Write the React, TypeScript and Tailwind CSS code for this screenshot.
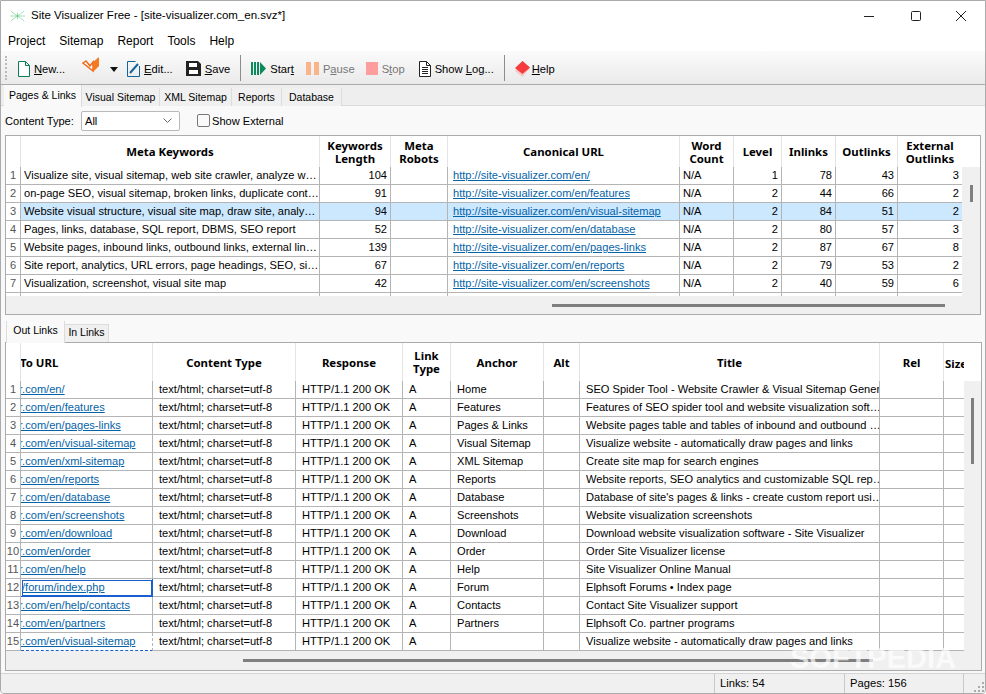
const topCols = "grid grid-cols-[15px_299px_71px_57px_232px_54px_48px_54px_62px_64px]"
const bottomCols = "grid grid-cols-[15px_132px_143px_107px_48px_93px_36px_300px_64px_20px]"
const uiFont = "font-['Liberation_Sans','Noto_Sans',sans-serif]"

const topRows = [
  ["Visualize site, visual sitemap, web site crawler, analyze w…", "104", "http://site-visualizer.com/en/", "1", "78", "43", "3"],
  ["on-page SEO, visual sitemap, broken links, duplicate cont…", "91", "http://site-visualizer.com/en/features", "2", "44", "66", "2"],
  ["Website visual structure, visual site map, draw site, analy…", "94", "http://site-visualizer.com/en/visual-sitemap", "2", "84", "51", "2"],
  ["Pages, links, database, SQL report, DBMS, SEO report", "52", "http://site-visualizer.com/en/database", "2", "80", "57", "3"],
  ["Website pages, inbound links, outbound links, external lin…", "139", "http://site-visualizer.com/en/pages-links", "2", "87", "67", "8"],
  ["Site report, analytics, URL errors, page headings, SEO, si…", "67", "http://site-visualizer.com/en/reports", "2", "79", "53", "2"],
  ["Visualization, screenshot, visual site map", "42", "http://site-visualizer.com/en/screenshots", "2", "40", "59", "6"],
]

const bottomRows = [
  ["r.com/en/", "Home", "SEO Spider Tool - Website Crawler & Visual Sitemap Gener…"],
  ["r.com/en/features", "Features", "Features of SEO spider tool and website visualization soft…"],
  ["r.com/en/pages-links", "Pages & Links", "Website pages table and tables of inbound and outbound …"],
  ["r.com/en/visual-sitemap", "Visual Sitemap", "Visualize website - automatically draw pages and links"],
  ["r.com/en/xml-sitemap", "XML Sitemap", "Create site map for search engines"],
  ["r.com/en/reports", "Reports", "Website reports, SEO analytics and customizable SQL rep…"],
  ["r.com/en/database", "Database", "Database of site's pages & links - create custom report usi…"],
  ["r.com/en/screenshots", "Screenshots", "Website visualization screenshots"],
  ["r.com/en/download", "Download", "Download website visualization software - Site Visualizer"],
  ["r.com/en/order", "Order", "Order Site Visualizer license"],
  ["r.com/en/help", "Help", "Site Visualizer Online Manual"],
  ["/forum/index.php", "Forum", "Elphsoft Forums • Index page"],
  ["r.com/en/help/contacts", "Contacts", "Contact Site Visualizer support"],
  ["r.com/en/partners", "Partners", "Elphsoft Co. partner programs"],
  ["r.com/en/visual-sitemap", "", "Visualize website - automatically draw pages and links"],
]

function Head({ children }: { children?: React.ReactNode }) {
  return (
    <div className="flex items-center justify-center overflow-hidden border-r border-[#e4e4e4] text-center font-['Noto_Sans',sans-serif] text-[11.4px] font-bold leading-[13px] text-black">
      {children}
    </div>
  )
}

function Cell({ className = "", children }: { className?: string; children?: React.ReactNode }) {
  return (
    <div className={`flex items-center overflow-hidden whitespace-nowrap border-r border-b border-[#b4b4b4] ${className}`}>
      {children}
    </div>
  )
}

function Tool({ icon, label, u, rest, off, className = "" }: { icon: React.ReactNode; label?: string; u: string; rest: string; off?: boolean; className?: string }) {
  return (
    <div className={`flex items-center ${off ? "text-[#777]" : "text-black"} ${className}`}>
      {icon}
      <span className="ml-[4px]">
        {label}
        <span className="underline">{u}</span>
        {rest}
      </span>
    </div>
  )
}

function Tab({ active, children, className = "" }: { active?: boolean; children: React.ReactNode; className?: string }) {
  return active ? (
    <div className={`z-10 -mb-px flex h-[22px] items-center justify-center border-r border-[#dcdcdc] bg-[#f9f9f9] pb-[3px] text-black ${className}`}>{children}</div>
  ) : (
    <div className={`mt-[3px] flex h-[18px] items-center justify-center border-r border-[#dcdcdc] bg-[#f0f0f0] text-black ${className}`}>{children}</div>
  )
}

function Logo() {
  return (
    <svg width="15" height="12" viewBox="0 0 18 14" fill="none" stroke="#a6dfba" strokeWidth="1.2">
      <path d="M1 1l5 4 3 2 3-2 5-4M0 7h18M1 13l5-4 3-2 3 2 5 4M9 3v8" />
      <circle cx="9" cy="7" r="1.5" fill="#7ccb98" stroke="none" />
    </svg>
  )
}

export default function App() {
  return (
    <div className={`${uiFont} relative flex h-[694px] w-[986px] flex-col overflow-hidden rounded-b-[4px] border-x border-t border-b border-[#ababab] bg-[#f9f9f9] text-[12px]`}>
      {/* title bar */}
      <div className="flex h-[29px] shrink-0 items-center bg-white pl-[9px] text-[11.5px] text-black">
        <Logo />
        <span className="ml-[6px]">Site Visualizer Free - [site-visualizer.com_en.svz*]</span>
        <div className="ml-auto flex items-center">
          <svg width="46" height="12" viewBox="0 0 46 12" stroke="#222" strokeWidth="1"><path d="M17 6.5h10" /></svg>
          <svg width="46" height="12" viewBox="0 0 46 12" fill="none" stroke="#222" strokeWidth="1"><rect x="18.5" y="1.5" width="9" height="9" rx="1" /></svg>
          <svg width="46" height="12" viewBox="0 0 46 12" stroke="#222" strokeWidth="1"><path d="M17 1l10 10M27 1L17 11" /></svg>
        </div>
      </div>

      {/* menu */}
      <div className="flex h-[21px] shrink-0 items-center gap-[14px] bg-white pl-[7px] text-[12px] text-black">
        <span>Project</span>
        <span>Sitemap</span>
        <span>Report</span>
        <span>Tools</span>
        <span>Help</span>
      </div>

      {/* toolbar */}
      <div className="flex h-[34px] shrink-0 items-center border-b border-[#ababab] bg-gradient-to-b from-[#fbfbfb] to-[#eaeaea] pt-[3px] text-[11.2px]">
        <div className="-mt-[3px] ml-[4px] h-[24px] w-[2px] border-l-2 border-dotted border-[#bbb]" />
        <Tool
          className="ml-[11px]"
          u="N"
          rest="ew..."
          icon={<svg width="12" height="16" viewBox="0 0 12 16" fill="#fff" stroke="#0b7d58"><path d="M.5.5h7l4 4v11H.5zM7.5.5v4h4" /></svg>}
        />
        <svg className="ml-[17px] -mt-[9px]" width="19" height="18" viewBox="0 0 19 18">
          <path d="M1 7l3-2 4 5 3-4v9z" fill="#fff" stroke="#f26a1b" strokeWidth="1.5" />
          <path d="M11 6l6-5v9l-6 6z" fill="#f47a1f" />
        </svg>
        <svg className="ml-[9px] mt-[1px]" width="8" height="5" viewBox="0 0 8 5"><path d="M0 0h8L4 5z" fill="#111" /></svg>
        <Tool
          className="ml-[9px]"
          u="E"
          rest="dit..."
          icon={<svg width="13" height="16" viewBox="0 0 13 16" fill="none" stroke="#15639b"><path d="M12.5 5v10.5H.5V.5h8" /><path d="M3 12l8-9" strokeWidth="2" /></svg>}
        />
        <Tool
          className="ml-[13px]"
          u="S"
          rest="ave"
          icon={<svg width="15" height="15" viewBox="0 0 15 15"><path d="M0 0h12l3 3v12H0z" fill="#222" /><path d="M3 2h8v4H3zM3 9h9v4H3z" fill="#fff" /></svg>}
        />
        <div className="-mt-[3px] ml-[10px] h-[26px] w-px bg-[#8d8d8d]" />
        <Tool
          className="ml-[10px]"
          u=""
          label="Star"
          rest=""
          icon={<svg width="15" height="13" viewBox="0 0 15 13" fill="#0c8a5c"><path d="M0 0h2v13H0zM3 0h2v13H3zM6 0h2v13H6zM9 0l6 6.5L9 13z" /></svg>}
        />
        <span className="text-black underline">t</span>
        <Tool
          off
          className="ml-[12px]"
          label="P"
          u="a"
          rest="use"
          icon={<svg width="13" height="13" viewBox="0 0 13 13" fill="#f9b48c"><path d="M0 0h5v13H0zM8 0h5v13H8z" /></svg>}
        />
        <Tool
          off
          className="ml-[11px]"
          label="S"
          u="t"
          rest="op"
          icon={<div className="h-[13px] w-[12px] bg-[#fd9d9d]" />}
        />
        <Tool
          className="ml-[14px]"
          label="Show "
          u="L"
          rest="og..."
          icon={<svg width="12" height="16" viewBox="0 0 12 16" fill="#fff" stroke="#222"><path d="M.5.5h7l4 4v11H.5zM7.5.5v4h4M3 6.5h6M3 8.5h6M3 10.5h6M3 12.5h6" /></svg>}
        />
        <div className="-mt-[3px] ml-[10px] h-[26px] w-px bg-[#8d8d8d]" />
        <Tool
          className="ml-[10px]"
          u="H"
          rest="elp"
          icon={<svg className="-mr-[2px]" width="15" height="16" viewBox="0 0 15 16"><path d="M7.5 0L15 7l-7.5 9L0 10z" fill="#f5c8c8" /><path d="M7.5 0L15 6.5 7.5 13 0 7z" fill="#f53b3b" /></svg>}
        />
      </div>

      {/* main tabs */}
      <div className="flex h-[21px] shrink-0 border-b border-[#dcdcdc] bg-[#eeeeee] pl-[3px] text-[10.5px]">
        <Tab active className="w-[78px] pt-[2px]">Pages &amp; Links</Tab>
        <Tab className="w-[78px] pt-[2px]">Visual Sitemap</Tab>
        <Tab className="w-[72px] pt-[2px]">XML Sitemap</Tab>
        <Tab className="w-[50px] pt-[2px]">Reports</Tab>
        <Tab className="w-[60px] pt-[2px]">Database</Tab>
      </div>

      {/* filter row */}
      <div className="flex h-[29px] shrink-0 items-center pl-[4px] text-[11.1px] text-black">
        <span className="mt-[2px] w-[69px] whitespace-nowrap">Content Type:</span>
        <div className="ml-[7px] flex h-[20px] w-[99px] items-center justify-between rounded-[2px] border border-[#b8b8b8] bg-white pl-[3px] pr-[7px]">
          <span className="mt-[2px]">All</span>
          <svg width="9" height="5" viewBox="0 0 9 5" fill="none" stroke="#666"><path d="M.5.5l4 4 4-4" /></svg>
        </div>
        <div className="ml-[17px] h-[13px] w-[13px] rounded-[2px] border border-[#777] bg-[#f9f9f9]" />
        <span className="ml-[2px] mt-[2px]">Show External</span>
      </div>

      {/* pages table */}
      <div className="ml-[4px] flex h-[180px] w-[976px] shrink-0 flex-col border border-[#ababab] bg-white text-[11.1px] text-black">
        <div className="flex min-h-0 flex-1">
          <div className="h-full w-[956px] shrink-0 overflow-hidden">
            <div className={`${topCols} h-[31px]`}>
              <Head />
              <Head>Meta Keywords</Head>
              <Head>Keywords<br />Length</Head>
              <Head>Meta<br />Robots</Head>
              <Head>Canonical URL</Head>
              <Head>Word<br />Count</Head>
              <Head>Level</Head>
              <Head>Inlinks</Head>
              <Head>Outlinks</Head>
              <div className="flex items-center justify-center text-center font-['Noto_Sans',sans-serif] text-[11.4px] font-bold leading-[13px]">External<br />Outlinks</div>
            </div>
            {topRows.map((r, i) => {
              const sel = i === 2 ? "bg-[#cce8ff]" : ""
              return (
                <div key={i} className={`${topCols} h-[18px]`}>
                  <Cell className="justify-center text-[#555]">{i + 1}</Cell>
                  <Cell className={`pl-[3px] ${sel}`}>{r[0]}</Cell>
                  <Cell className={`justify-end pr-[3px] ${sel}`}>{r[1]}</Cell>
                  <Cell className={sel} />
                  <Cell className={`pl-[5px] text-[#0563a8] underline ${sel}`}>{r[2]}</Cell>
                  <Cell className={`pl-[3px] ${sel}`}>N/A</Cell>
                  <Cell className={`justify-end pr-[3px] ${sel}`}>{r[3]}</Cell>
                  <Cell className={`justify-end pr-[3px] ${sel}`}>{r[4]}</Cell>
                  <Cell className={`justify-end pr-[3px] ${sel}`}>{r[5]}</Cell>
                  <Cell className={`justify-end border-r-0 pr-[3px] ${sel}`}>{r[6]}</Cell>
                </div>
              )
            })}
            <div className={`${topCols} h-[4px]`}>
              {Array.from({ length: 9 }).map((_, i) => (
                <div key={i} className="border-r border-[#b4b4b4]" />
              ))}
            </div>
          </div>
          <div className="flex-1 bg-white pt-[31px]">
            <div className="h-full bg-[#f0f0f0] pl-[8px] pt-[18px]">
              <div className="h-[17px] w-[3px] bg-[#7f7f7f]" />
            </div>
          </div>
        </div>
        <div className="flex h-[18px] shrink-0 items-center bg-[#f0f0f0] pl-[546px]">
          <div className="h-[3px] w-[393px] bg-[#7f7f7f]" />
        </div>
      </div>

      {/* links tabs */}
      <div className="mt-[6px] flex h-[21px] w-[976px] shrink-0 pl-[5px] text-[10.5px]">
        <Tab active className="w-[59px] border-l border-[#dcdcdc]">Out Links</Tab>
        <Tab className="w-[44px] border-t border-[#dcdcdc] pb-[2px]">In Links</Tab>
      </div>

      {/* links table */}
      <div className="ml-[4px] flex h-[329px] w-[977px] shrink-0 flex-col border border-[#ababab] bg-white text-[11.1px] text-black">
        <div className="flex min-h-0 flex-1">
          <div className="h-full w-[958px] shrink-0 overflow-hidden">
            <div className={`${bottomCols} h-[38px]`}>
              <Head />
              <Head><span className="mr-auto -ml-px">To URL</span></Head>
              <Head>Content Type</Head>
              <Head>Response</Head>
              <Head>Link<br />Type</Head>
              <Head>Anchor</Head>
              <Head>Alt</Head>
              <Head>Title</Head>
              <Head>Rel</Head>
              <div className="overflow-hidden whitespace-nowrap pl-[1px] pt-[12px] font-['Noto_Sans',sans-serif] text-[11.4px] font-bold">Size</div>
            </div>
            {bottomRows.map((r, i) => (
              <div key={i} className={`${bottomCols} h-[18px]`}>
                <Cell className="justify-center text-[#555]">{i + 1}</Cell>
                <Cell className={`text-[#0563a8] underline ${i === 11 ? "border-[#1a5fd0]! outline outline-1 -outline-offset-2 outline-[#1a5fd0]" : ""} ${i === 14 ? "border-dashed border-b-[#1a5fd0]!" : ""}`}>
                  <span className={i === 11 ? "pl-px" : "-ml-[2px]"}>{r[0]}</span>
                </Cell>
                <Cell className="pl-[6px]">text/html; charset=utf-8</Cell>
                <Cell className="pl-[6px]">HTTP/1.1 200 OK</Cell>
                <Cell className="pl-[6px]">A</Cell>
                <Cell className="pl-[6px]">{r[1]}</Cell>
                <Cell />
                <Cell className="pl-[6px]">{r[2]}</Cell>
                <Cell />
                <Cell className="border-r-0" />
              </div>
            ))}
          </div>
          <div className="flex-1 bg-white pt-[38px]">
            <div className="h-full bg-[#f0f0f0] pl-[7px] pt-[17px]">
              <div className="h-[66px] w-[3px] bg-[#7f7f7f]" />
            </div>
          </div>
        </div>
        <div className="flex h-[19px] shrink-0 items-center bg-[#f0f0f0] pl-[237px]">
          <div className="h-[3px] w-[630px] bg-[#7f7f7f]" />
        </div>
      </div>

      {/* status bar */}
      <div className="mt-auto flex h-[20px] shrink-0 items-center border-t border-[#d4d4d4] bg-[#f0f0f0] pl-[713px] text-[11.2px] text-black">
        <div className="flex h-full w-[130px] items-center border-l border-[#c8c8c8] pl-[5px]">Links: 54</div>
        <div className="flex h-full w-[120px] items-center border-x border-[#c8c8c8] pl-[5px]">Pages: 156</div>
        <svg className="ml-auto mt-[6px]" width="12" height="12" viewBox="0 0 12 12" fill="#aaa">
          <path d="M9 1h2v2H9zM5 5h2v2H5zM9 5h2v2H9zM1 9h2v2H1zM5 9h2v2H5zM9 9h2v2H9z" />
        </svg>
      </div>

      {/* watermark */}
      <div className="pointer-events-none absolute left-[789px] top-[640px] font-['Liberation_Sans',sans-serif] text-[29px] font-bold leading-[34px] text-white/70">
        SOFTPEDIA
      </div>
    </div>
  )
}
